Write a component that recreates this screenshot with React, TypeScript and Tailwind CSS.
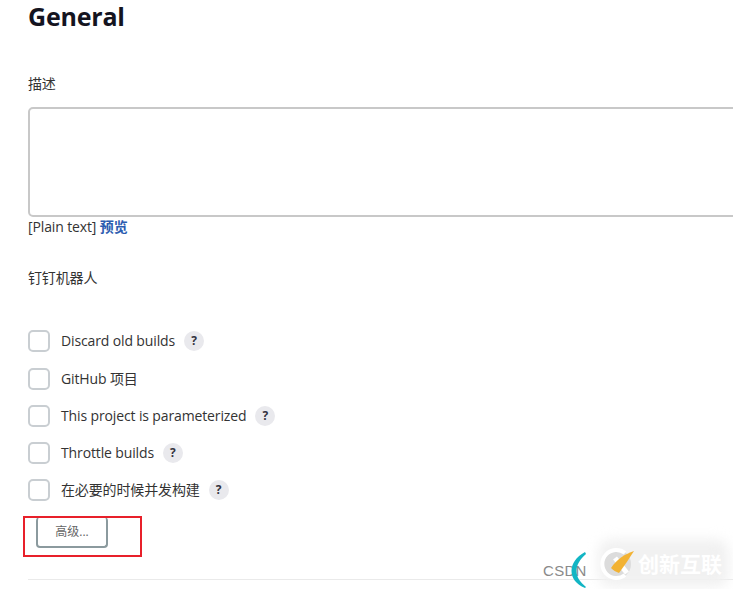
const font = "font-['Open_Sans','Noto_Sans_CJK_SC',sans-serif]";

const options = [
  { label: "Discard old builds", help: true },
  { label: "GitHub 项目", help: false },
  { label: "This project is parameterized", help: true },
  { label: "Throttle builds", help: true },
  { label: "在必要的时候并发构建", help: true },
];

function HelpBadge() {
  return (
    <span className="ml-[9px] flex h-[20px] w-[20px] items-center justify-center rounded-full bg-[#e9e9ed] text-[12px] font-bold text-[#333340]">
      ?
    </span>
  );
}

function Watermark() {
  return (
    <div className="absolute bottom-0 right-0 flex h-[59px] w-[190px]">
      <div className="relative h-full w-[44px] shrink-0">
        <span className="absolute bottom-[10px] left-0 font-['Liberation_Sans',sans-serif] text-[15px] leading-[16px] tracking-[0.3px] text-[#8a8a8a]">
          CSDN
        </span>
        <svg className="absolute bottom-0 right-0" width="16" height="38" viewBox="0 0 16 38">
          <path d="M14 1 C5 6 0.500 13 0.500 20 C0.500 27 5 33 14 37 L15 36 C9 31 5.500 26 5.500 20 C5.500 14 9 8 15 3Z" fill="#12b5c4" />
        </svg>
      </div>
      <div className="relative ml-[11px] flex h-[48px] flex-1 items-center self-end pb-[2px]">
        <div className="absolute -top-[2px] bottom-[2px] left-0 right-[4px] rounded-[14px] bg-[#f1f1f1] blur-[6px]" />
        <svg className="relative" width="36" height="36" viewBox="0 0 36 36">
          <circle cx="18" cy="18" r="15" fill="#dcdcdc" />
          <path d="M27 7 A14 14 0 1 0 27 29" fill="none" stroke="#ffffff" strokeWidth="4" />
          <path d="M17 12 L29 27" stroke="#ffffff" strokeWidth="5" />
          <path d="M13 22 C19 13 27 8 36 5 C31 13 26 20 21 27 C18 26 15 24 13 22Z" fill="#f2b233" />
        </svg>
        <span className={`relative ml-[4px] whitespace-nowrap text-[21px] font-bold leading-[26px] text-white ${font}`}>
          创新互联
        </span>
      </div>
    </div>
  );
}

export default function App() {
  return (
    <div className={`relative h-[589px] w-[733px] overflow-hidden bg-white ${font}`}>
      <div className="pl-[28px]">
        <h1 className="text-[25px] font-bold leading-[32px] tracking-[-0.2px] text-[#14141f]">General</h1>

        <div className="mt-[42px] text-[14px] leading-[20px] tracking-[-0.13px] text-[#333]">描述</div>
        <div className="mt-[13px] h-[110px] w-[760px] rounded-[5px] border-2 border-[#c8c8c8] bg-white" />
        <div className="text-[14px] leading-[20px] tracking-[-0.13px] text-[#333]">
          [Plain text] <a className="font-bold text-[#2b5cb0]">预览</a>
        </div>

        <div className="mt-[31px] text-[14px] leading-[20px] tracking-[-0.13px] text-[#333]">钉钉机器人</div>

        <div className="mt-[42px] flex flex-col gap-[15px]">
          {options.map((o) => (
            <div key={o.label} className="flex h-[22px] items-center first:mb-[1px]">
              <span className="h-[22px] w-[22px] rounded-[5px] border-2 border-[#c9ced2] bg-white" />
              <span className="ml-[11px] text-[14px] leading-[20px] tracking-[-0.13px] text-[#333]">{o.label}</span>
              {o.help && <HelpBadge />}
            </div>
          ))}
        </div>

        <button className="ml-[8px] mt-[16px] block h-[31px] w-[72px] rounded-[4px] border-2 border-t-0 border-[#8b9a9e] text-[12px] text-[#666]">
          高级...
        </button>

        <div className="mt-[31px] h-[1px] w-full bg-[#eaeaea]" />
      </div>

      {/* red annotation box */}
      <div className="absolute left-[23px] top-[516px] h-[41px] w-[119px] border-2 border-[#e8202a]" />
      <Watermark />
    </div>
  );
}
